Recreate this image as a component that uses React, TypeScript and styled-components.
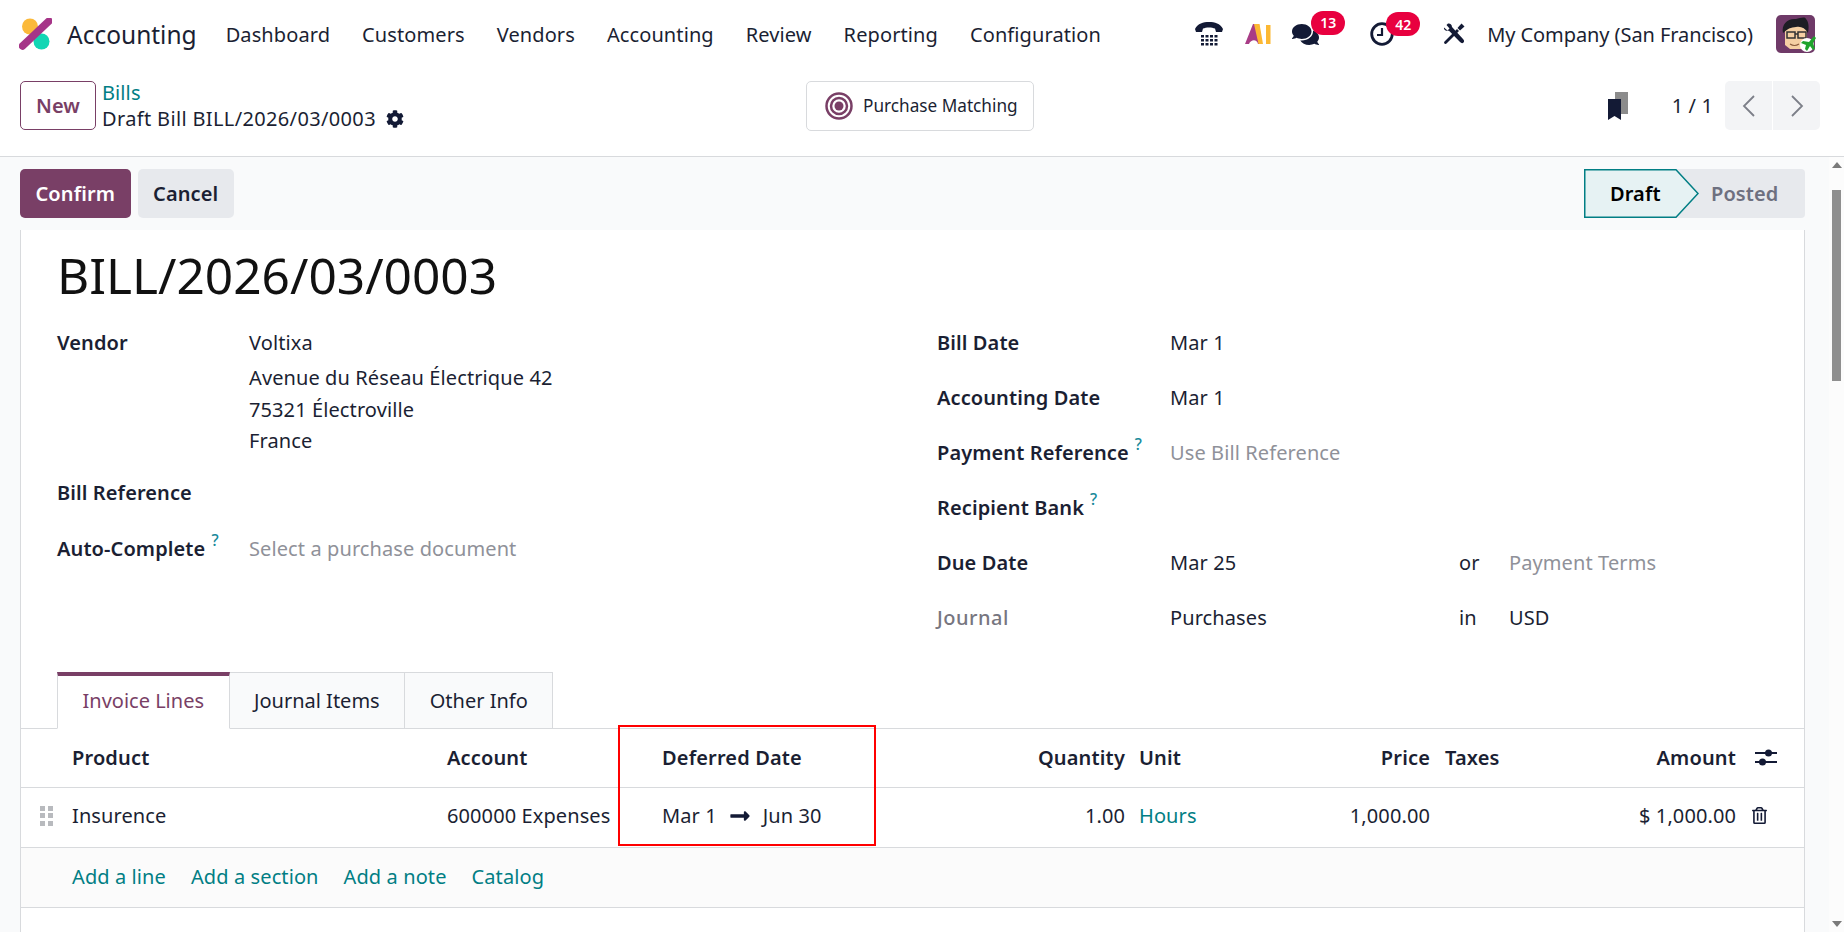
import styled, { createGlobalStyle } from 'styled-components';
import { FaComments, FaCog, FaRegTrashAlt, FaLongArrowAltRight } from 'react-icons/fa';

const GlobalStyle = createGlobalStyle`
  * { box-sizing: border-box; }
  html, body { margin: 0; height: 100%; }
  body {
    font-family: "Noto Sans", "Open Sans", sans-serif;
    font-size: 20px;
    letter-spacing: 0.1px;
    color: #1b1f33;
    background: #fff;
  }
`;

const Page = styled.div`
  height: 100vh;
  overflow: hidden;
  display: flex;
  flex-direction: column;
`;

const Navbar = styled.header`
  height: 68px;
  flex: none;
  display: flex;
  align-items: center;
  padding: 0 28px 0 19px;
`;

const AppName = styled.span`
  font-size: 24.5px;
  letter-spacing: 0;
  margin-left: 15px;
  margin-right: 29px;
`;

const Menu = styled.nav`
  display: flex;
  gap: 32px;
`;

const NavRight = styled.div`
  margin-left: auto;
  display: flex;
  align-items: center;
`;

const NavSlot = styled.div<{ $ml: number }>`
  position: relative;
  display: flex;
  align-items: center;
  margin-left: ${(p) => p.$ml}px;
`;

const CompanyName = styled.span`
  letter-spacing: -0.08px;
`;

const Badge = styled.span<{ $left: number }>`
  position: absolute;
  left: ${(p) => p.$left}px;
  top: -10px;
  width: 34px;
  height: 24px;
  border-radius: 12px;
  background: #e8003f;
  color: #fff;
  font-size: 14px;
  font-weight: 600;
  letter-spacing: 0;
  display: flex;
  align-items: center;
  justify-content: center;
`;

const ControlPanel = styled.div`
  height: 89px;
  flex: none;
  display: flex;
  align-items: center;
  padding: 0 24px 13px 20px;
  border-bottom: 1px solid #d8dadd;
`;

const PanelLeft = styled.div`
  flex: 0 0 786px;
  display: flex;
  align-items: center;
  gap: 6px;
`;

const NewButton = styled.button`
  width: 76px;
  height: 49px;
  border: 1px solid #793f66;
  border-radius: 5px;
  background: #fff;
  color: #793f66;
  font: inherit;
  font-weight: 600;
  letter-spacing: inherit;
`;

const Breadcrumb = styled.div`
  display: flex;
  flex-direction: column;
  line-height: 26px;
`;

const BreadLink = styled.a`
  color: #017e84;
`;

const CurrentDoc = styled.div`
  display: flex;
  align-items: center;
  gap: 10px;
  letter-spacing: 0.35px;
`;

const SmartButton = styled.button`
  width: 228px;
  height: 50px;
  border: 1px solid #d8dadd;
  border-radius: 5px;
  background: #fff;
  color: inherit;
  font: inherit;
  font-size: 17.2px;
  letter-spacing: 0;
  display: flex;
  align-items: center;
  gap: 10px;
  padding: 0 0 0 18px;
  white-space: nowrap;
  svg { flex: none; }
`;

const PanelRight = styled.div`
  margin-left: auto;
  display: flex;
  align-items: center;
`;

const PagerText = styled.span`
  margin-left: 43px;
  margin-right: 12px;
`;

const Pager = styled.div`
  display: flex;
  gap: 1px;
`;

const PagerButton = styled.button`
  width: 47px;
  height: 49px;
  border: 0;
  background: #f3f4f6;
  color: #7c7f88;
  display: flex;
  align-items: center;
  justify-content: center;
  padding: 0;
  &:first-child { border-radius: 5px 0 0 5px; }
  &:last-child { border-radius: 0 5px 5px 0; }
`;

const Body = styled.div`
  flex: 1;
  min-height: 0;
  display: flex;
  background: #f9fafb;
`;

const Main = styled.main`
  flex: 1;
  min-width: 0;
  display: flex;
  flex-direction: column;
`;

const ActionBar = styled.div`
  height: 73px;
  flex: none;
  display: flex;
  align-items: center;
  gap: 7px;
  padding: 0 24px 0 20px;
`;

const ActionButton = styled.button<{ $primary?: boolean }>`
  height: 49px;
  padding: 0 15.5px;
  border: 0;
  border-radius: 5px;
  background: ${(p) => (p.$primary ? '#793f66' : '#e7e9ed')};
  color: ${(p) => (p.$primary ? '#fff' : '#1b1f33')};
  font: inherit;
  font-weight: 600;
  letter-spacing: inherit;
`;

const StatusBar = styled.div`
  margin-left: auto;
  display: flex;
  height: 49px;
  width: 221px;
  background: #e7e9ed;
  border-radius: 0 4px 4px 0;
  position: relative;
`;

const StatusDraft = styled.div`
  width: 115px;
  color: #000;
  font-weight: 600;
  display: flex;
  align-items: center;
  padding-left: 26px;
  position: relative;
  z-index: 1;
`;

const StatusShape = styled.svg`
  position: absolute;
  left: 0;
  top: 0;
  z-index: -1;
`;

const StatusPosted = styled.div`
  color: #6e7080;
  font-weight: 600;
  display: flex;
  align-items: center;
  padding-left: 12px;
`;

const Sheet = styled.section`
  flex: 1;
  margin: 0 24px 0 20px;
  background: #fff;
  border: solid #d8dadd;
  border-width: 0 1px;
`;

const Title = styled.h1`
  margin: 15px 0 0 36px;
  font-size: 49.6px;
  line-height: 60px;
  font-weight: 400;
  letter-spacing: 0;
  color: #111;
`;

const FormGrid = styled.div`
  display: grid;
  grid-template-columns: 880px 1fr;
  margin: 10px 0 0 36px;
`;

const LeftGroup = styled.div`
  padding-top: 13px;
`;

const LeftRow = styled.div<{ $mt?: number }>`
  display: grid;
  grid-template-columns: 192px 1fr;
  align-items: start;
  line-height: 30px;
  margin-top: ${(p) => p.$mt ?? 0}px;
`;

const Label = styled.label<{ $muted?: boolean }>`
  font-weight: ${(p) => (p.$muted ? 500 : 600)};
  color: ${(p) => (p.$muted ? '#77767f' : '#1b1f33')};
  letter-spacing: ${(p) => (p.$muted ? '0.5px' : '0.1px')};
`;

const Help = styled.sup`
  color: #17899a;
  font-size: 16px;
  font-weight: 500;
  margin-left: 6px;
  line-height: 0;
  vertical-align: 10px;
`;

const Address = styled.div`
  margin-top: 4px;
  line-height: 31.5px;
`;

const Placeholder = styled.span`
  color: #8f9199;
`;

const RightRow = styled.div`
  display: grid;
  grid-template-columns: 233px 289px 1fr;
  align-items: center;
  height: 55px;
`;

const Joined = styled.div`
  display: grid;
  grid-template-columns: 50px 1fr;
`;

const Tabs = styled.div`
  margin-top: 27px;
  display: flex;
  padding-left: 36px;
  border-bottom: 1px solid #d8dadd;
`;

const Tab = styled.div<{ $active?: boolean }>`
  height: 57px;
  margin-bottom: -1px;
  padding: 0 24.5px ${(p) => (p.$active ? 3 : 0)}px;
  letter-spacing: 0;
  display: flex;
  align-items: center;
  background: ${(p) => (p.$active ? '#fff' : '#f9fafb')};
  color: ${(p) => (p.$active ? '#793f66' : '#1b1f33')};
  border: 1px solid #d8dadd;
  border-left-width: ${(p) => (p.$active ? 1 : 0)}px;
  border-top: ${(p) => (p.$active ? '4px solid #793f66' : '1px solid #d8dadd')};
  border-bottom-color: ${(p) => (p.$active ? '#fff' : '#d8dadd')};
`;

const Lines = styled.div`
  position: relative;
`;

const Row = styled.div<{ $height: number; $head?: boolean }>`
  display: grid;
  grid-template-columns: 51px 375px 215px 230px 247px 121px 185px 115px 191px 53px;
  align-items: center;
  height: ${(p) => p.$height}px;
  padding-bottom: ${(p) => (p.$head ? 1 : 4)}px;
  border-bottom: 1px solid #d8dadd;
  font-weight: ${(p) => (p.$head ? 600 : 400)};
  letter-spacing: ${(p) => (p.$head ? '0.15px' : 'inherit')};
`;

const Cell = styled.div<{ $right?: number }>`
  white-space: nowrap;
  text-align: ${(p) => (p.$right ? 'right' : 'left')};
  padding-right: ${(p) => p.$right ?? 0}px;
  svg { display: block; }
`;

const IconCell = styled.div<{ $pl: number }>`
  padding-left: ${(p) => p.$pl}px;
  svg { display: block; }
`;

const DragHandle = styled.div`
  display: grid;
  grid-template-columns: 5px 5px;
  grid-auto-rows: 5px;
  gap: 2.5px 3px;
  margin-left: 19px;
  width: 13px;
  span { background: #b8babe; }
`;

const DateRange = styled.div`
  display: flex;
  align-items: center;
  gap: 12px;
`;

const UnitLink = styled.a`
  color: #017e84;
`;

const AddRow = styled.div`
  height: 60px;
  display: flex;
  align-items: center;
  gap: 25px;
  padding: 0 0 2px 51px;
  background: #fbfbfb;
  border-bottom: 1px solid #d8dadd;
  a { color: #017e84; }
`;

const Highlight = styled.div`
  position: absolute;
  left: 597px;
  top: -4px;
  width: 258px;
  height: 121px;
  border: 2px solid #f00;
  pointer-events: none;
`;

const Scrollbar = styled.div`
  flex: 0 0 15px;
  background: #fcfcfc;
  display: flex;
  flex-direction: column;
  align-items: center;
  padding: 5px 0;
`;

const Thumb = styled.div`
  width: 9px;
  height: 191px;
  margin-top: 22px;
  background: #8f8f8f;
`;

const ScrollArrow = styled.div<{ $down?: boolean }>`
  width: 0;
  height: 0;
  border-left: 5px solid transparent;
  border-right: 5px solid transparent;
  margin-top: ${(p) => (p.$down ? 'auto' : '0')};
  border-bottom: ${(p) => (p.$down ? '0' : '6px solid #7a7a7a')};
  border-top: ${(p) => (p.$down ? '6px solid #7a7a7a' : '0')};
`;

const Logo = () => (
  <svg width="33" height="32" viewBox="0 0 33 32">
    <circle cx="11" cy="8.5" r="8" fill="#fbb93a" />
    <circle cx="22.5" cy="23.5" r="8" fill="#12d6b4" />
    <line x1="3.5" y1="28" x2="30" y2="3" stroke="#a63488" strokeWidth="7.5" strokeLinecap="round" />
  </svg>
);

const PhoneIcon = () => (
  <svg width="28" height="24" viewBox="0 0 28 24" fill="#131a35">
    <path d="M0 7C3 1.500 8 0 14 0s11 1.500 14 7l-1 3h-6l-1-3.500c-3-1.500-9-1.500-12 0L7 10H1z" />
    <path d="M6 13h3v2.500H6zm4.500 0h3v2.500h-3zm4.500 0h3v2.500h-3zm4.500 0h3v2.500h-3zM6 17h3v2.500H6zm4.500 0h3v2.500h-3zm4.500 0h3v2.500h-3zm4.500 0h3v2.500h-3zM6 21h3v2.500H6zm4.500 0h3v2.500h-3zm4.500 0h3v2.500h-3zm4.500 0h3v2.500h-3z" />
  </svg>
);

const AiMark = () => (
  <svg width="26" height="21" viewBox="0 0 26 21">
    <path d="M8 0h6l3 20h-4C12 15 6 15 4 20H0z" fill="#a83c86" />
    <path d="M9 0h5.500L18 20h-4.500z" fill="#fcb833" />
    <rect x="21" y="1" width="4.500" height="19" fill="#fcb833" />
  </svg>
);

const ClockIcon = () => (
  <svg width="24" height="24" viewBox="0 0 24 24" fill="none" stroke="#131a35">
    <circle cx="12" cy="12" r="10.300" strokeWidth="2.800" />
    <path d="M12 6v7H7" strokeWidth="2.200" />
  </svg>
);

const ToolsIcon = () => (
  <svg width="22" height="22" viewBox="0 0 22 22" fill="#131a35">
    <path d="M1.500 18.500 14 6l2 2L3.500 20.500a1.400 1.400 0 0 1-2-2z" />
    <path d="m14.500 5 4-4.500L21.500 3.500l-4.500 4z" />
    <path d="M1 4.500 4.500 7.500l2-2L3.500 2l1.500-1.500c2-.5 4 1 4 3.500l11 12c1.200 1.200 1.500 2.500.5 3.500s-2.300.8-3.500-.5L6 7.800C3 8 .5 7 1 4.500z" />
  </svg>
);

const Avatar = () => (
  <svg width="40" height="39" viewBox="0 0 40 39">
    <rect width="39" height="38" rx="5" fill="#6f3a68" />
    <path d="M9 30V16c0-7 5-10 11-10s11 3 11 10v9l-6 9H14z" fill="#f5cfa3" />
    <path d="M7 18C5 9 12 3 20 4c4-1 9-3 10 0 3 3 3 9 2 14-3-5-7-7-12-6-5 0-9 2-13 6z" fill="#1d1d24" />
    <rect x="11" y="17" width="8" height="6" fill="none" stroke="#333" strokeWidth="1.500" />
    <rect x="22" y="17" width="8" height="6" fill="none" stroke="#333" strokeWidth="1.500" />
    <path d="M19 19h3" stroke="#333" strokeWidth="1.500" />
    <path d="M14 29c3 2 6 2 9 0" stroke="#8a5a3c" strokeWidth="1.200" fill="none" />
    <circle cx="31" cy="30" r="7" fill="#fff" />
    <path d="M38 21l-5 6-6-1-2 2 5 2-1 4 2 2 3-5 3 4 2-1-2-6 3-5z" fill="#1fa32c" />
  </svg>
);

const TargetIcon = () => (
  <svg width="28" height="28" viewBox="0 0 28 28" fill="none" stroke="#793f66" strokeWidth="2.500">
    <circle cx="14" cy="14" r="12.500" />
    <circle cx="14" cy="14" r="8" />
    <circle cx="14" cy="14" r="4.500" fill="#793f66" stroke="none" />
  </svg>
);

const BookmarkIcon = () => (
  <svg width="21" height="28" viewBox="0 0 21 28">
    <path d="M7 0h13v22H7z" fill="#8c8c8c" />
    <path d="M0 7h13v21l-6.500-4L0 28z" fill="#131a35" />
  </svg>
);

const Chevron = ({ left }: { left?: boolean }) => (
  <svg width="14" height="22" viewBox="0 0 14 22" fill="none" stroke="currentColor" strokeWidth="1.800">
    <path d={left ? 'M12 1 2 11l10 10' : 'M2 1l10 10L2 21'} />
  </svg>
);

const AdjustIcon = () => (
  <svg width="22" height="19" viewBox="0 0 22 19" fill="#131a35">
    <rect y="4" width="22" height="2" />
    <rect y="13" width="22" height="2" />
    <circle cx="13.500" cy="5" r="3.500" />
    <circle cx="7.500" cy="14" r="3.500" />
  </svg>
);

const App = () => (
  <Page>
    <GlobalStyle />
    <Navbar>
      <Logo />
      <AppName>Accounting</AppName>
      <Menu>
        <span>Dashboard</span>
        <span>Customers</span>
        <span>Vendors</span>
        <span>Accounting</span>
        <span>Review</span>
        <span>Reporting</span>
        <span>Configuration</span>
      </Menu>
      <NavRight>
        <NavSlot $ml={0}><PhoneIcon /></NavSlot>
        <NavSlot $ml={22}><AiMark /></NavSlot>
        <NavSlot $ml={21}>
          <FaComments size={27} color="#131a35" />
          <Badge $left={19}>13</Badge>
        </NavSlot>
        <NavSlot $ml={51}>
          <ClockIcon />
          <Badge $left={16}>42</Badge>
        </NavSlot>
        <NavSlot $ml={49}><ToolsIcon /></NavSlot>
        <NavSlot $ml={22}><CompanyName>My Company (San Francisco)</CompanyName></NavSlot>
        <NavSlot $ml={23}><Avatar /></NavSlot>
      </NavRight>
    </Navbar>
    <ControlPanel>
      <PanelLeft>
        <NewButton>New</NewButton>
        <Breadcrumb>
          <BreadLink>Bills</BreadLink>
          <CurrentDoc>
            Draft Bill BILL/2026/03/0003 <FaCog size={18} color="#131a35" />
          </CurrentDoc>
        </Breadcrumb>
      </PanelLeft>
      <SmartButton>
        <TargetIcon />
        Purchase Matching
      </SmartButton>
      <PanelRight>
        <BookmarkIcon />
        <PagerText>1 / 1</PagerText>
        <Pager>
          <PagerButton><Chevron left /></PagerButton>
          <PagerButton><Chevron /></PagerButton>
        </Pager>
      </PanelRight>
    </ControlPanel>
    <Body>
      <Main>
        <ActionBar>
          <ActionButton $primary>Confirm</ActionButton>
          <ActionButton>Cancel</ActionButton>
          <StatusBar>
            <StatusDraft>
              <StatusShape width="115" height="49" viewBox="0 0 115 49">
                <path d="M.75.75H92L114 24.500 92 48.250H.75z" fill="#e6f2f3" stroke="#017e84" strokeWidth="1.500" />
              </StatusShape>
              Draft
            </StatusDraft>
            <StatusPosted>Posted</StatusPosted>
          </StatusBar>
        </ActionBar>
        <Sheet>
          <Title>BILL/2026/03/0003</Title>
          <FormGrid>
            <LeftGroup>
              <LeftRow>
                <Label>Vendor</Label>
                <div>
                  Voltixa
                  <Address>
                    Avenue du Réseau Électrique 42
                    <br />
                    75321 Électroville
                    <br />
                    France
                  </Address>
                </div>
              </LeftRow>
              <LeftRow $mt={21}>
                <Label>Bill Reference</Label>
              </LeftRow>
              <LeftRow $mt={26}>
                <Label>Auto-Complete<Help>?</Help></Label>
                <Placeholder>Select a purchase document</Placeholder>
              </LeftRow>
            </LeftGroup>
            <div>
              <RightRow>
                <Label>Bill Date</Label>
                <span>Mar 1</span>
              </RightRow>
              <RightRow>
                <Label>Accounting Date</Label>
                <span>Mar 1</span>
              </RightRow>
              <RightRow>
                <Label>Payment Reference<Help>?</Help></Label>
                <Placeholder>Use Bill Reference</Placeholder>
              </RightRow>
              <RightRow>
                <Label>Recipient Bank<Help>?</Help></Label>
              </RightRow>
              <RightRow>
                <Label>Due Date</Label>
                <span>Mar 25</span>
                <Joined>
                  <span>or</span>
                  <Placeholder>Payment Terms</Placeholder>
                </Joined>
              </RightRow>
              <RightRow>
                <Label $muted>Journal</Label>
                <span>Purchases</span>
                <Joined>
                  <span>in</span>
                  <span>USD</span>
                </Joined>
              </RightRow>
            </div>
          </FormGrid>
          <Tabs>
            <Tab $active>Invoice Lines</Tab>
            <Tab>Journal Items</Tab>
            <Tab>Other Info</Tab>
          </Tabs>
          <Lines>
            <Row $height={59} $head>
              <span />
              <Cell>Product</Cell>
              <Cell>Account</Cell>
              <Cell>Deferred Date</Cell>
              <Cell $right={14}>Quantity</Cell>
              <Cell>Unit</Cell>
              <Cell $right={15}>Price</Cell>
              <Cell>Taxes</Cell>
              <Cell $right={15}>Amount</Cell>
              <IconCell $pl={4}><AdjustIcon /></IconCell>
            </Row>
            <Row $height={60}>
              <DragHandle>
                <span /><span /><span /><span /><span /><span />
              </DragHandle>
              <Cell>Insurence</Cell>
              <Cell>600000 Expenses</Cell>
              <Cell>
                <DateRange>
                  Mar 1 <FaLongArrowAltRight size={22} color="#131a35" /> Jun 30
                </DateRange>
              </Cell>
              <Cell $right={14}>1.00</Cell>
              <Cell><UnitLink>Hours</UnitLink></Cell>
              <Cell $right={15}>1,000.00</Cell>
              <span />
              <Cell $right={15}>$ 1,000.00</Cell>
              <IconCell $pl={0}><FaRegTrashAlt size={17} color="#131a35" /></IconCell>
            </Row>
            <AddRow>
              <a>Add a line</a>
              <a>Add a section</a>
              <a>Add a note</a>
              <a>Catalog</a>
            </AddRow>
            <Highlight />
          </Lines>
        </Sheet>
      </Main>
      <Scrollbar>
        <ScrollArrow />
        <Thumb />
        <ScrollArrow $down />
      </Scrollbar>
    </Body>
  </Page>
);

export default App;
